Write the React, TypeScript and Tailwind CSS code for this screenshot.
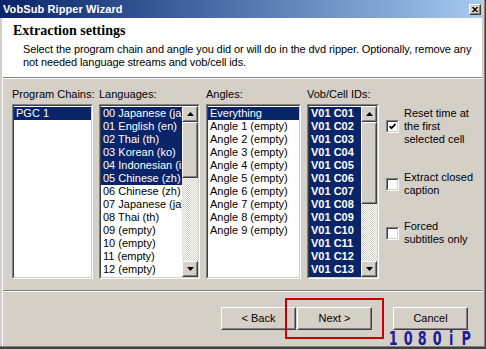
import type { ReactNode } from 'react'

const languages = [
  '00 Japanese (ja)',
  '01 English (en)',
  '02 Thai (th)',
  '03 Korean (ko)',
  '04 Indonesian (in)',
  '05 Chinese (zh)',
  '06 Chinese (zh)',
  '07 Japanese (ja)',
  '08 Thai (th)',
  '09 (empty)',
  '10 (empty)',
  '11 (empty)',
  '12 (empty)',
  '13 (empty)',
]

const angles = ['Everything', ...Array.from({ length: 9 }, (_, i) => `Angle ${i + 1} (empty)`)]

const cells = Array.from({ length: 14 }, (_, i) => `V01 C${String(i + 1).padStart(2, '0')}`)

// Classic 2px sunken edge (list boxes, check boxes)
function Sunken({ className = '', inner = '', children }: { className?: string; inner?: string; children?: ReactNode }) {
  return (
    <div className={`border border-t-[#808080] border-l-[#808080] border-r-white border-b-white ${className}`}>
      <div className={`h-full border border-t-[#404040] border-l-[#404040] border-r-[#d4d0c8] border-b-[#d4d0c8] ${inner}`}>
        {children}
      </div>
    </div>
  )
}

// Classic 2px raised edge (buttons, scroll thumbs)
function Raised({ className = '', children }: { className?: string; children?: ReactNode }) {
  return (
    <div className={`border border-t-white border-l-white border-r-[#404040] border-b-[#404040] bg-[#d4d0c8] ${className}`}>
      <div className="h-full border border-t-[#d4d0c8] border-l-[#d4d0c8] border-r-[#808080] border-b-[#808080] flex items-center justify-center">
        {children}
      </div>
    </div>
  )
}

function Arrow({ up }: { up?: boolean }) {
  return (
    <svg width="7" height="4" viewBox="0 0 7 4">
      <polygon points={up ? '3.5,0 7,4 0,4' : '0,0 7,0 3.5,4'} fill="#000" />
    </svg>
  )
}

function ScrollBar({ thumb }: { thumb: string }) {
  return (
    <div className="w-[16px] h-full shrink-0 flex flex-col bg-[repeating-conic-gradient(#d4d0c8_0_25%,#ffffff_0_50%)] bg-[length:2px_2px]">
      <Raised className="h-[16px] shrink-0"><Arrow up /></Raised>
      <Raised className={`shrink-0 ${thumb}`} />
      <div className="flex-1" />
      <Raised className="h-[16px] shrink-0"><Arrow /></Raised>
    </div>
  )
}

function Item({ text, sel, bold }: { text: string; sel?: boolean; bold?: boolean }) {
  return (
    <div
      className={`h-[13px] leading-[13px] pl-[2px] whitespace-nowrap overflow-hidden ${sel ? 'bg-[#0a246a] text-white' : ''} ${bold ? 'font-bold' : ''}`}
    >
      {text}
    </div>
  )
}

function Column({ label, width, children }: { label: string; width: string; children: ReactNode }) {
  return (
    <div className={`flex flex-col gap-[3px] ${width}`}>
      <div className="h-[13px] leading-[13px] whitespace-nowrap">{label}</div>
      <Sunken className="h-[175px] bg-white" inner="flex overflow-hidden">
        {children}
      </Sunken>
    </div>
  )
}

function Check({ checked, lines, className = '' }: { checked?: boolean; lines: string[]; className?: string }) {
  return (
    <div className={`flex items-center gap-[5px] ${className}`}>
      <Sunken className="w-[13px] h-[13px] shrink-0 bg-white" inner="flex items-center justify-center">
        {checked && (
          <svg width="7" height="7" viewBox="0 0 7 7">
            <polyline points="0.5,3 2.5,5.2 6.5,1" fill="none" stroke="#000" strokeWidth="1.7" />
          </svg>
        )}
      </Sunken>
      <div className="leading-[13px]">
        {lines.map(l => (
          <div key={l} className="whitespace-nowrap">{l}</div>
        ))}
      </div>
    </div>
  )
}

function Button({ children }: { children: ReactNode }) {
  return <Raised className="w-[75px] h-[23px]">{children}</Raised>
}

export default function App() {
  return (
    <div className="relative w-[486px] h-[349px] overflow-hidden bg-[#d4d0c8] text-[11px] text-black font-['Liberation_Sans',Arial,sans-serif] border-r border-b-2 border-[#404040]">
      <div className="h-full flex flex-col border-r border-b border-[#808080] pr-[2px]">
        {/* Title bar */}
        <div className="h-[18px] shrink-0 flex items-center justify-between bg-linear-to-r from-[#0a246a] to-[#a6caf0]">
          <span className="pl-[3px] text-white font-bold text-[11px] leading-none tracking-[0.1px]">VobSub Ripper Wizard</span>
          <Raised className="w-[12px] h-[11px] mr-[1px]">
            <svg width="6" height="5" viewBox="0 0 6 5">
              <path d="M0.5 0 L5.5 5 M5.5 0 L0.5 5" stroke="#000" strokeWidth="1.3" />
            </svg>
          </Raised>
        </div>

        <div className="flex-1 flex flex-col pl-[2px]">
          <div className="flex-1 flex flex-col border-l border-white">
            {/* Header */}
            <div className="h-[59px] shrink-0 bg-white pl-[10px] pt-[5px]">
              <div className="font-['Liberation_Serif',serif] font-bold text-[14px] leading-[16px]">Extraction settings</div>
              <div className="mt-[4px] pl-[10px] leading-[13px] whitespace-nowrap tracking-[-0.1px]">
                Select the program chain and angle you did or will do in the dvd ripper. Optionally, remove any
                <br />
                not needed language streams and vob/cell ids.
              </div>
            </div>
            <div className="h-[2px] shrink-0 border-t border-[#808080] border-b border-b-white" />

            {/* Body */}
            <div className="flex pt-[9px] pl-[9px] gap-[6px]">
              <Column label="Program Chains:" width="w-[81px]">
                <div className="flex-1 pt-px">
                  <Item text="PGC 1" sel />
                </div>
              </Column>
              <Column label="Languages:" width="w-[101px]">
                <div className="flex-1 min-w-0 pt-px">
                  {languages.map((l, i) => (
                    <Item key={l + i} text={l} sel={i < 6} />
                  ))}
                </div>
                <ScrollBar thumb="h-[56px]" />
              </Column>
              <Column label="Angles:" width="w-[95px]">
                <div className="flex-1 pt-px">
                  {angles.map((a, i) => (
                    <Item key={a} text={a} sel={i === 0} />
                  ))}
                </div>
              </Column>
              <Column label="Vob/Cell IDs:" width="w-[72px]">
                <div className="flex-1 min-w-0 pt-px">
                  {cells.map(c => (
                    <Item key={c} text={c} sel bold />
                  ))}
                </div>
                <ScrollBar thumb="h-[82px]" />
              </Column>
              <div className="flex flex-col pt-[19px] pl-px">
                <Check checked lines={['Reset time at', 'the first', 'selected cell']} />
                <Check className="mt-[25px]" lines={['Extract closed', 'caption']} />
                <Check className="mt-[23px]" lines={['Forced', 'subtitles only']} />
              </div>
            </div>

            <div className="h-[2px] mt-[11px] shrink-0 border-t border-[#808080] border-b border-b-white" />

            {/* Buttons */}
            <div className="flex justify-end mt-[15px] pr-[14px]">
              <Button>&lt; Back</Button>
              <div className="ml-px">
                <Button>Next &gt;</Button>
              </div>
              <div className="ml-[21px]">
                <Button>Cancel</Button>
              </div>
            </div>
          </div>
        </div>
      </div>

      {/* Highlight drawn over the screenshot */}
      <div className="absolute left-[285px] top-[298px] w-[99px] h-[41px] border-2 border-[#c80000]" />

      {/* Watermark */}
      <div className="absolute left-[386px] top-[330px] flex text-[#1c1c9c] font-['Liberation_Sans_Narrow','DejaVu_Sans_Condensed',sans-serif] font-bold text-[19px] leading-[17px]">
        {['1', '0', '8', '0', 'i', 'P'].map((c, i) => (
          <span key={i} className="w-[14.5px] text-center scale-x-75">{c}</span>
        ))}
      </div>
    </div>
  )
}
